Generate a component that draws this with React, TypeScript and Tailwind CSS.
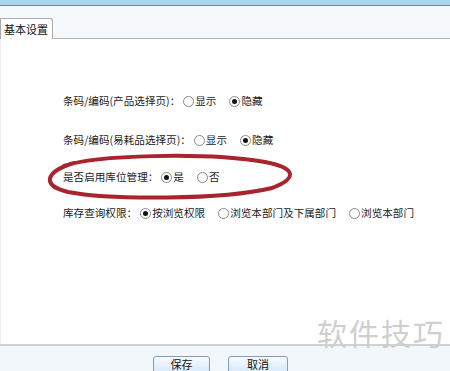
import React from "react";

const FONT = { fontFamily: '"Noto Sans CJK SC", "Noto Sans", sans-serif' };

function Radio({ checked }: { checked?: boolean }) {
  return (
    <span className="inline-flex items-center justify-center w-[11px] h-[11px] rounded-full border border-[#8a8a8a] bg-white mr-[1px]">
      {checked && <span className="w-[5px] h-[5px] rounded-full bg-[#111]" />}
    </span>
  );
}

function Opt({ label, checked }: { label: string; checked?: boolean }) {
  return (
    <span className="inline-flex items-center">
      <Radio checked={checked} />
      <span>{label}</span>
    </span>
  );
}

function Row({ label, opts, className = "" }: { label: string; opts: { label: string; checked?: boolean }[]; className?: string }) {
  return (
    <div className={`flex items-center h-[14px] text-[10.6px] text-[#1a1a1a] pl-[62px] ${className}`}>
      <span className="mr-[3px]">{label}</span>
      <div className="flex items-center gap-[13px]">
        {opts.map((o) => (
          <Opt key={o.label} {...o} />
        ))}
      </div>
    </div>
  );
}

export default function App() {
  return (
    <div className="relative w-[450px] h-[371px] overflow-hidden bg-white flex flex-col" style={FONT}>
      {/* window title strip */}
      <div className="h-[5px] bg-[#a9d4f0]" />
      <div className="h-px bg-[#6f8799]" />

      {/* tabs */}
      <div className="h-[33px] bg-[#f5f9fc] flex items-end">
        <div className="w-[53px] h-[21px] bg-white border border-b-0 border-[#a9a9a9] rounded-tr-[3px] flex items-center pl-[3px] text-[11px] text-[#111]">
          基本设置
        </div>
        <div className="flex-1 border-b border-[#b4b4b4]" />
      </div>

      {/* settings */}
      <div className="flex-1 flex flex-col pt-[55px] border-l border-[#eef2f4]">
        <Row label="条码/编码(产品选择页)：" opts={[{ label: "显示" }, { label: "隐藏", checked: true }]} />
        <Row
          className="mt-[25px]"
          label="条码/编码(易耗品选择页)："
          opts={[{ label: "显示" }, { label: "隐藏", checked: true }]}
        />
        <Row className="mt-[23px]" label="是否启用库位管理：" opts={[{ label: "是", checked: true }, { label: "否" }]} />
        <Row
          className="mt-[22px]"
          label="库存查询权限："
          opts={[{ label: "按浏览权限", checked: true }, { label: "浏览本部门及下属部门" }, { label: "浏览本部门" }]}
        />
      </div>

      {/* footer */}
      <div className="h-[27px] border-t-2 border-[#cdd2d5] bg-[#f1f7fa] flex gap-[18px] pl-[153px] pt-[10px]">
        <button className="w-[57px] h-[22px] rounded-[3px] border border-[#7f9db9] bg-gradient-to-b from-[#f6fbff] to-[#cfe3f5] text-[11px] leading-none text-[#111] flex justify-center items-start pt-[2px]">
          保存
        </button>
        <button className="w-[60px] h-[22px] rounded-[3px] border border-[#7f9db9] bg-gradient-to-b from-[#f6fbff] to-[#cfe3f5] text-[11px] leading-none text-[#111] flex justify-center items-start pt-[2px]">
          取消
        </button>
      </div>

      {/* red annotation */}
      <svg className="absolute left-0 top-0 pointer-events-none" width="450" height="371">
        <path
          d="M64 166 C 95 155, 205 152, 265 162 C 296 168, 298 178, 272 188 C 222 200, 110 200, 68 192 C 42 186, 44 172, 74 163"
          fill="none"
          stroke="#a8242f"
          strokeWidth="4"
          strokeLinecap="round"
        />
      </svg>

      {/* watermark */}
      <div className="absolute left-[317px] top-[317px] text-[30px] leading-none tracking-[2px] text-[#cfcfcf]">
        软件技巧
      </div>
    </div>
  );
}
